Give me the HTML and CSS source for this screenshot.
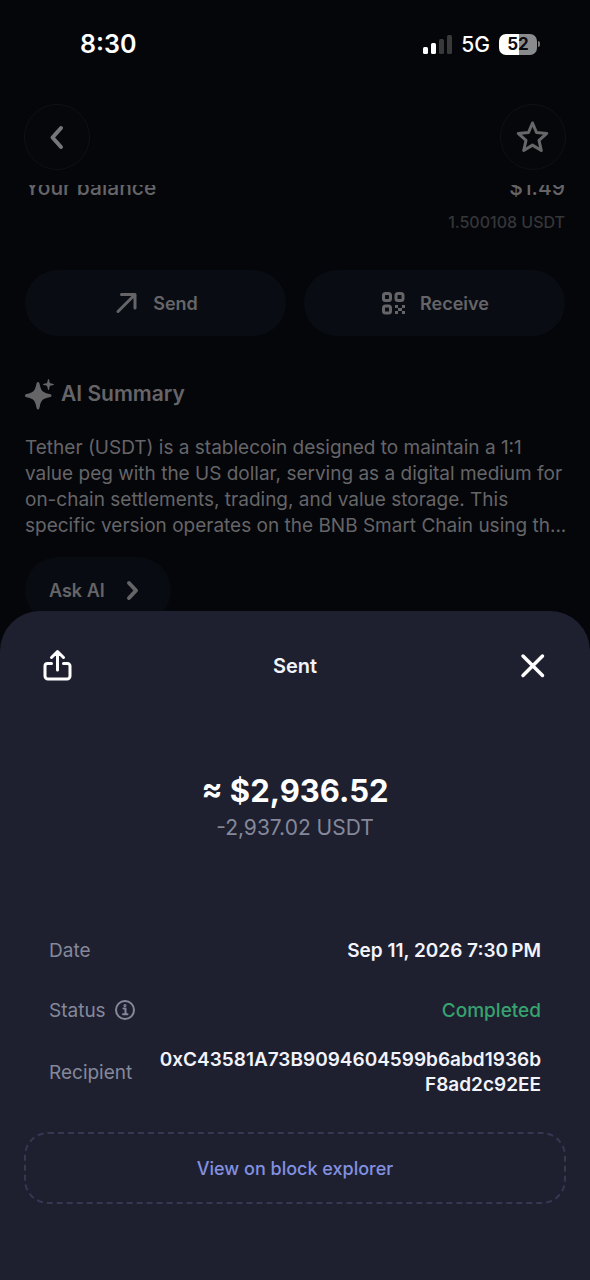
FILE: index.html
```html
<!DOCTYPE html>
<html lang="en">
<head>
<meta charset="utf-8">
<meta name="viewport" content="width=device-width, initial-scale=1">
<title>Sent</title>
<link rel="stylesheet" href="styles.css">
</head>
<body>
<div class="page">
  <div class="status-bar">
    <time class="clock">8:30</time>
    <div class="indicators">
      <svg class="signal" width="30" height="20" viewBox="0 0 30 20" aria-hidden="true">
        <rect x="1" y="13" width="5" height="7" rx="1.500" fill="#fff"/>
        <rect x="9" y="9" width="5" height="11" rx="1.500" fill="#fff"/>
        <rect x="17" y="5" width="5" height="15" rx="1.500" fill="#38393b"/>
        <rect x="25" y="1" width="5" height="19" rx="1.500" fill="#38393b"/>
      </svg>
      <span class="network">5G</span>
      <span class="battery"><span class="battery-level">52</span><span class="battery-tip"></span></span>
    </div>
  </div>
  <header class="toolbar">
    <button class="round-button" type="button" aria-label="Back">
      <svg width="32" height="32" viewBox="0 0 32 32" fill="none" stroke="#77777a" stroke-width="4" stroke-linecap="round" stroke-linejoin="round"><path d="M20 7 11.500 16.500 20 26"/></svg>
    </button>
    <button class="round-button" type="button" aria-label="Add to favourites">
      <svg width="36" height="36" viewBox="0 0 36 36" fill="none" stroke="#67676a" stroke-width="3" stroke-linejoin="round"><path d="m17.500 4 4 9.500 10.300.9-7.800 6.900 2.300 10.200-8.800-5.400-8.800 5.400 2.300-10.200-7.800-6.900 10.300-.9z"/></svg>
    </button>
  </header>
  <main class="scroller">
    <div class="scroll-content">
      <section class="balance">
        <div class="balance-row"><span>Your balance</span><span>$1.49</span></div>
        <div class="balance-amount">1.500108 USDT</div>
      </section>
      <div class="actions">
        <button class="action" type="button">
          <svg width="28" height="28" viewBox="0 0 28 28" fill="none" stroke="currentColor" stroke-width="3" stroke-linecap="round" stroke-linejoin="round"><path d="M5 22.500 22 5.500M8.500 5.500H22V19"/></svg>
          <span>Send</span>
        </button>
        <button class="action" type="button">
          <svg width="28" height="28" viewBox="0 0 28 28" fill="none" stroke="currentColor" stroke-width="3"><rect x="3.500" y="4.500" width="7" height="7" rx="2"/><rect x="16" y="4.500" width="7" height="7" rx="2"/><rect x="3.500" y="17" width="7" height="7" rx="2"/><g fill="currentColor" stroke="none"><rect x="15" y="16" width="3" height="3"/><rect x="22" y="16" width="3" height="3"/><rect x="18" y="19" width="4" height="3"/><rect x="15" y="22" width="3" height="3"/><rect x="22" y="22" width="3" height="3"/></g></svg>
          <span>Receive</span>
        </button>
      </div>
      <section class="summary">
        <h2 class="summary-title">
          <svg width="30" height="32" viewBox="0 0 30 32" fill="currentColor" aria-hidden="true"><path d="M13 4c1.200 0 1.400 1.200 1.700 2.600 1.300 6.100 2.800 7.900 8.600 9.200 1.600.4 3.200.6 3.200 1.900s-1.600 1.500-3.200 1.900c-5.800 1.300-7.300 3.100-8.600 9.200-.3 1.400-.5 2.700-1.700 2.700s-1.400-1.300-1.700-2.700c-1.300-6.100-2.800-7.900-8.600-9.200C1.100 19.200 0 19 0 17.700s1.100-1.500 2.700-1.900c5.800-1.300 7.300-3.100 8.600-9.200C11.600 5.200 11.800 4 13 4z"/><path d="M23.500 1c.9 0 .8 3.200 1.500 3.900s4 .6 4 1.500-3.300.8-4 1.500-.6 4.100-1.500 4.100-.8-3.400-1.500-4.100-4-.6-4-1.500 3.300-.8 4-1.500S22.600 1 23.500 1z"/></svg>
          <span>AI Summary</span>
        </h2>
        <p class="summary-text">Tether (USDT) is a stablecoin designed to maintain a 1:1 value peg with the US dollar, serving as a digital medium for on-chain settlements, trading, and value storage. This specific version operates on the BNB Smart Chain using th...</p>
        <button class="ask" type="button">
          <span>Ask AI</span>
          <svg width="20" height="24" viewBox="0 0 20 24" fill="none" stroke="currentColor" stroke-width="4" stroke-linecap="round" stroke-linejoin="round"><path d="m6 5 7 7.500L6 20"/></svg>
        </button>
      </section>
    </div>
  </main>
</div>

<section class="sheet" role="dialog" aria-labelledby="sheet-title">
  <header class="sheet-header">
    <button class="icon-button" type="button" aria-label="Share">
      <svg width="36" height="36" viewBox="0 0 36 36" fill="none" stroke="#fff" stroke-width="3" stroke-linecap="round" stroke-linejoin="round"><path d="M18.500 22V5M12.500 9.500 18.500 3.500l6 6M12.500 15.500H8.500a2.500 2.500 0 0 0-2.500 2.500v10a3 3 0 0 0 3 3h19a3 3 0 0 0 3-3V18a2.500 2.500 0 0 0-2.500-2.500h-4"/></svg>
    </button>
    <h1 class="sheet-title" id="sheet-title">Sent</h1>
    <button class="icon-button" type="button" aria-label="Close">
      <svg width="36" height="36" viewBox="0 0 36 36" fill="none" stroke="#fff" stroke-width="3.500" stroke-linecap="round"><path d="m8 8 19.500 19.500M27.500 8 8 27.500"/></svg>
    </button>
  </header>
  <div class="amount">
    <div class="amount-fiat">≈ $2,936.52</div>
    <div class="amount-token">-2,937.02 USDT</div>
  </div>
  <dl class="details">
    <div class="detail"><dt>Date</dt><dd>Sep 11, 2026 7:30&#8239;PM</dd></div>
    <div class="detail">
      <dt>Status
        <svg width="22" height="22" viewBox="0 0 22 22" fill="none" stroke="currentColor" stroke-width="2" stroke-linecap="round" stroke-linejoin="round" aria-hidden="true"><circle cx="11" cy="11" r="9"/><path d="M9.500 9.500h2V15M9 15.200h4.500"/><circle cx="11" cy="6.500" r=".6"/></svg>
      </dt>
      <dd class="completed">Completed</dd>
    </div>
    <div class="detail"><dt>Recipient</dt><dd class="address">0xC43581A73B9094604599b6abd1936bF8ad2c92EE</dd></div>
  </dl>
  <a class="explorer" href="#">View on block explorer</a>
</section>
</body>
</html>
```
FILE: styles.css
```css
* { box-sizing: border-box; }

body {
  margin: 0;
  background: #05060a;
  color: #656568;
  font-family: Inter, "Noto Sans", sans-serif;
  font-size: 18px;
  font-weight: 500;
}

h1, h2, p, dl, dd { margin: 0; }

button {
  border: 0;
  padding: 0;
  background: none;
  color: inherit;
  font: inherit;
}

svg { display: block; flex: none; }

.page {
  display: flex;
  flex-direction: column;
  min-height: 100vh;
}

.status-bar {
  display: flex;
  align-items: center;
  justify-content: space-between;
  height: 88px;
  padding: 0 53px 0 80px;
  color: #fff;
}

.clock { font-size: 25px; font-weight: 600; }

.indicators { display: flex; align-items: center; gap: 9px; }

.network { font-size: 21px; }

.battery {
  position: relative;
  display: flex;
  align-items: center;
  justify-content: center;
  width: 38px;
  height: 21px;
  border-radius: 7px;
  background: linear-gradient(90deg, #fff 52%, #8a8b8d 52%);
  color: #0b0c0f;
  font-size: 17px;
  font-weight: 700;
}

.battery-tip {
  position: absolute;
  right: -3px;
  width: 2px;
  height: 6px;
  border-radius: 0 2px 2px 0;
  background: #77787a;
}

.toolbar {
  display: flex;
  justify-content: space-between;
  padding: 16px 24px 15px;
}

.round-button {
  display: flex;
  align-items: center;
  justify-content: center;
  width: 66px;
  height: 66px;
  border: 1px solid #101114;
  border-radius: 50%;
  background: #06070a;
}

.scroller { flex: 1; overflow: hidden; padding: 0 25px; }

/* The list is scrolled a little way under the toolbar. */
.scroll-content { margin-top: -10px; }

.balance-row {
  display: flex;
  justify-content: space-between;
  font-size: 21px;
  font-weight: 500;
  line-height: 26px;
}

.balance-amount {
  margin-top: 10px;
  color: #353639;
  font-size: 16px;
  line-height: 22px;
  text-align: right;
}

.actions {
  display: grid;
  grid-template-columns: 1fr 1fr;
  gap: 18px;
  margin-top: 37px;
}

.action {
  display: flex;
  align-items: center;
  justify-content: center;
  gap: 12px;
  height: 66px;
  border-radius: 33px;
  background: #0a0c14;
  font-weight: 600;
}

.summary { margin-top: 42px; }

.summary-title {
  display: flex;
  align-items: center;
  gap: 6px;
  font-size: 21px;
  font-weight: 600;
  line-height: 32px;
}

.summary-text {
  margin: 25px -6px 0 0;
  font-size: 19px;
  font-weight: 400;
  line-height: 26px;
}

.ask {
  display: flex;
  align-items: center;
  gap: 18px;
  height: 66px;
  margin-top: 18px;
  padding: 0 28px 0 24px;
  border-radius: 33px;
  background: #090b12;
  font-weight: 600;
}

.sheet {
  position: fixed;
  right: 0;
  bottom: 0;
  left: 0;
  padding: 37px 24px 76px;
  border-radius: 40px 40px 0 0;
  background: #1e2030;
  color: #f2f3fb;
}

.sheet-header {
  display: flex;
  align-items: center;
  justify-content: space-between;
  padding: 0 15px;
}

.sheet-title { font-size: 20px; font-weight: 600; }

.amount { margin-top: 87px; text-align: center; }

.amount-fiat { color: #fff; font-size: 31px; font-weight: 700; line-height: 40px; }

.amount-token { color: #85889a; font-size: 21px; font-weight: 400; line-height: 34px; }

.details { margin-top: 75px; padding: 0 25px; font-size: 19px; }

.detail {
  display: flex;
  align-items: center;
  justify-content: space-between;
  gap: 24px;
  min-height: 60px;
}

.detail:last-child { min-height: 64px; }

.detail dt {
  display: flex;
  align-items: center;
  gap: 8px;
  color: #85889a;
  font-weight: 400;
}

.detail dd { font-weight: 600; line-height: 25px; text-align: right; }

.detail .completed { color: #37a36f; font-weight: 500; }

.address { flex: 1; overflow-wrap: anywhere; }

.explorer {
  display: flex;
  align-items: center;
  justify-content: center;
  height: 72px;
  margin-top: 28px;
  border: 2px dashed #353850;
  border-radius: 24px;
  color: #8291e0;
  text-decoration: none;
}
```
